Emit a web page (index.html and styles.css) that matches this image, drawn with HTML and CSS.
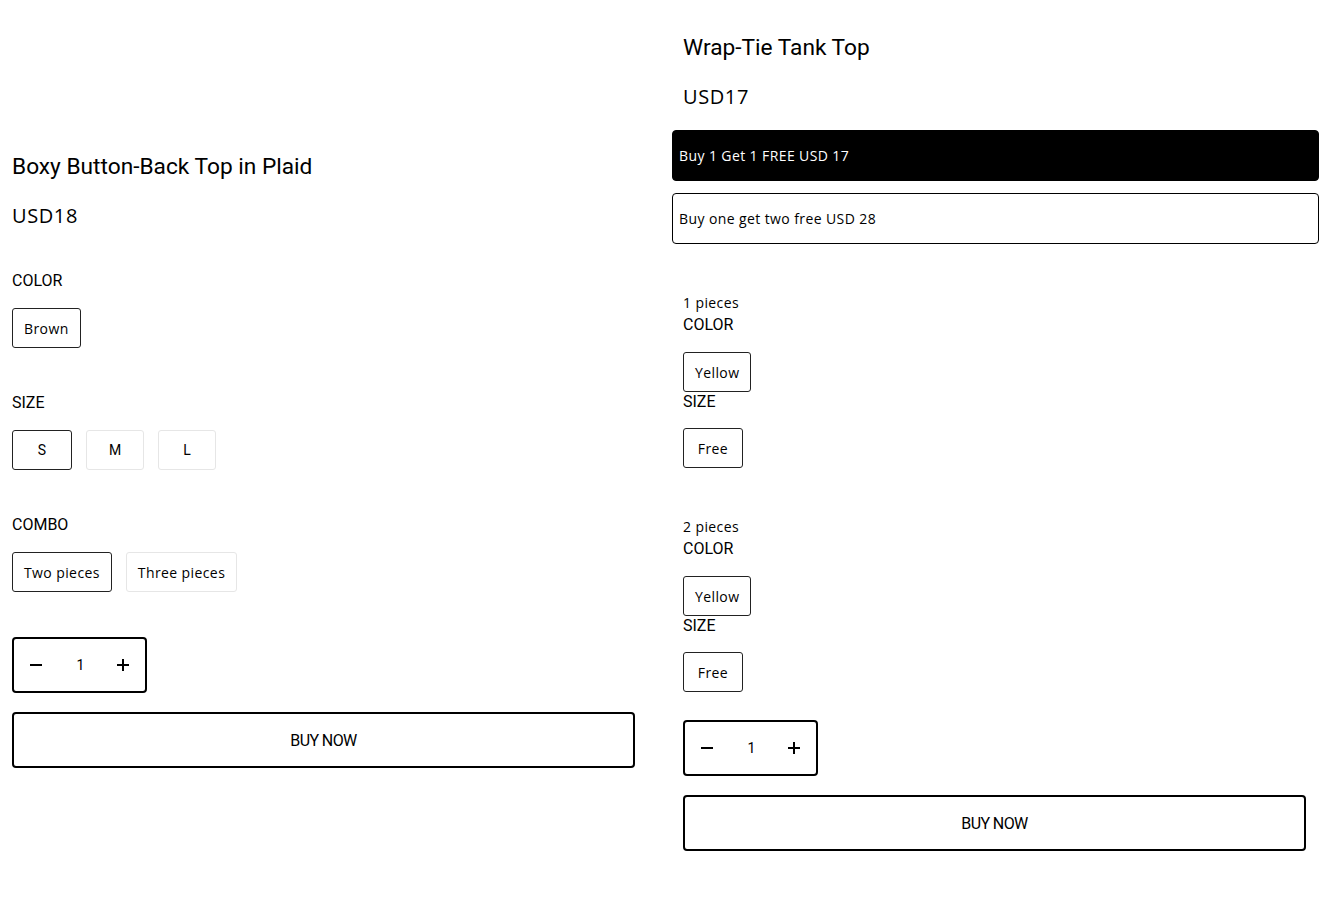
FILE: index.html
```html
<!DOCTYPE html>
<html lang="en">
<head>
    <meta charset="UTF-8">
    <meta name="viewport" content="width=device-width, initial-scale=1.0">
    <title>Bundle Offers</title>
    <link rel="stylesheet" href="styles.css">
</head>
<body>
    <div class="page">
        <!-- left product -->
        <div class="product product-left">
            <h2 class="title">Boxy Button-Back Top in Plaid</h2>
            <div class="price">USD18</div>

            <div class="option option-first">
                <div class="label">COLOR</div>
                <div class="choices">
                    <button class="choice active">Brown</button>
                </div>
            </div>

            <div class="option">
                <div class="label">SIZE</div>
                <div class="choices">
                    <button class="choice size active">S</button>
                    <button class="choice size">M</button>
                    <button class="choice size">L</button>
                </div>
            </div>

            <div class="option">
                <div class="label">COMBO</div>
                <div class="choices">
                    <button class="choice active">Two pieces</button>
                    <button class="choice">Three pieces</button>
                </div>
            </div>

            <div class="qty">
                <button class="qty-btn" aria-label="minus">
                    <svg width="12" height="12" viewBox="0 0 12 12"><path d="M0 6h12" stroke="#000" stroke-width="2"/></svg>
                </button>
                <span class="qty-num">1</span>
                <button class="qty-btn" aria-label="plus">
                    <svg width="12" height="12" viewBox="0 0 12 12"><path d="M0 6h12M6 0v12" stroke="#000" stroke-width="2"/></svg>
                </button>
            </div>
            <button class="buy">BUY NOW</button>
        </div>

        <!-- right product -->
        <div class="product product-right">
            <div class="inner">
                <h2 class="title">Wrap-Tie Tank Top</h2>
                <div class="price">USD17</div>
            </div>

            <div class="offers">
                <div class="offer selected">Buy 1 Get 1 FREE USD 17</div>
                <div class="offer">Buy one get two free USD 28</div>
            </div>

            <div class="inner">
                <div class="bundle">
                    <div class="pieces">1 pieces</div>
                    <div class="label">COLOR</div>
                    <div class="choices">
                        <button class="choice active">Yellow</button>
                    </div>
                    <div class="label">SIZE</div>
                    <div class="choices choices-tight">
                        <button class="choice active">Free</button>
                    </div>
                </div>

                <div class="bundle">
                    <div class="pieces">2 pieces</div>
                    <div class="label">COLOR</div>
                    <div class="choices">
                        <button class="choice active">Yellow</button>
                    </div>
                    <div class="label">SIZE</div>
                    <div class="choices choices-tight">
                        <button class="choice active">Free</button>
                    </div>
                </div>

                <div class="qty qty-right">
                    <button class="qty-btn" aria-label="minus">
                        <svg width="12" height="12" viewBox="0 0 12 12"><path d="M0 6h12" stroke="#000" stroke-width="2"/></svg>
                    </button>
                    <span class="qty-num">1</span>
                    <button class="qty-btn" aria-label="plus">
                        <svg width="12" height="12" viewBox="0 0 12 12"><path d="M0 6h12M6 0v12" stroke="#000" stroke-width="2"/></svg>
                    </button>
                </div>
                <button class="buy">BUY NOW</button>
            </div>
        </div>
    </div>
</body>
</html>
```

FILE: styles.css
```css
body {
    margin: 0;
    font-family: Roboto, "Liberation Sans", sans-serif;
    color: #000;
    background: #fff;
}
.page {
    display: flex;
    align-items: flex-start;
}
.product {
    width: 50%;
    box-sizing: border-box;
}
.product-left {
    padding: 152px 25px 0 12px;
}
.product-right {
    padding: 33px 1px 0 12px;
}
.inner {
    padding: 0 13px 0 11px;
}
.title {
    margin: 0;
    font-size: 22.7px;
    font-weight: 400;
    line-height: 30px;
}
.price {
    margin-top: 19px;
    font-family: "Open Sans", Lato, sans-serif;
    font-size: 20px;
    line-height: 30px;
    letter-spacing: 0.6px;
}
.option {
    margin-top: 45px;
}
.option-first {
    margin-top: 40px;
}
.label {
    font-size: 16px;
    line-height: 20px;
}
.choices {
    display: flex;
    gap: 14px;
    margin-top: 17px;
}
.choices-tight {
    margin-top: 16px;
}
.choice {
    min-width: 60px;
    height: 40px;
    padding: 0 11px;
    background: #fff;
    border: 1px solid #e6e6e6;
    border-radius: 3px;
    font-family: "Open Sans", Lato, sans-serif;
    font-size: 14px;
    letter-spacing: 0.4px;
    color: #000;
    cursor: pointer;
}
.choice.active {
    border-color: #222;
}
.choice.size {
    width: 58px;
    min-width: 0;
    font-family: Roboto, sans-serif;
    font-size: 14px;
    letter-spacing: 0;
}
.choice.size.active {
    width: 60px;
}
.qty {
    display: flex;
    align-items: center;
    justify-content: space-between;
    width: 135px;
    height: 56px;
    margin-top: 45px;
    padding: 0 16px;
    box-sizing: border-box;
    border: 2px solid #000;
    border-radius: 4px;
}
.qty-right {
    margin-top: 28px;
}
.qty-btn {
    display: flex;
    padding: 0;
    border: none;
    background: none;
    cursor: pointer;
}
.qty-num {
    font-size: 14px;
    padding-left: 2px;
}
.buy {
    display: block;
    width: 100%;
    height: 56px;
    margin-top: 19px;
    background: #fff;
    border: 2px solid #000;
    border-radius: 4px;
    font-family: Roboto, sans-serif;
    font-size: 16px;
    letter-spacing: -0.6px;
    color: #000;
    cursor: pointer;
}
.offers {
    margin-top: 18px;
    display: flex;
    flex-direction: column;
    gap: 12px;
}
.offer {
    display: flex;
    align-items: center;
    height: 51px;
    padding: 0 6px;
    box-sizing: border-box;
    border: 1px solid #000;
    border-radius: 4px;
    font-family: "Open Sans", Lato, sans-serif;
    font-size: 14px;
    letter-spacing: 0.4px;
}
.offer.selected {
    background: #000;
    color: #fff;
}
.bundle {
    margin-top: 49px;
}
.pieces {
    margin-bottom: 2px;
    font-family: "Open Sans", Lato, sans-serif;
    font-size: 14px;
    line-height: 20px;
    letter-spacing: 0.4px;
}
```
